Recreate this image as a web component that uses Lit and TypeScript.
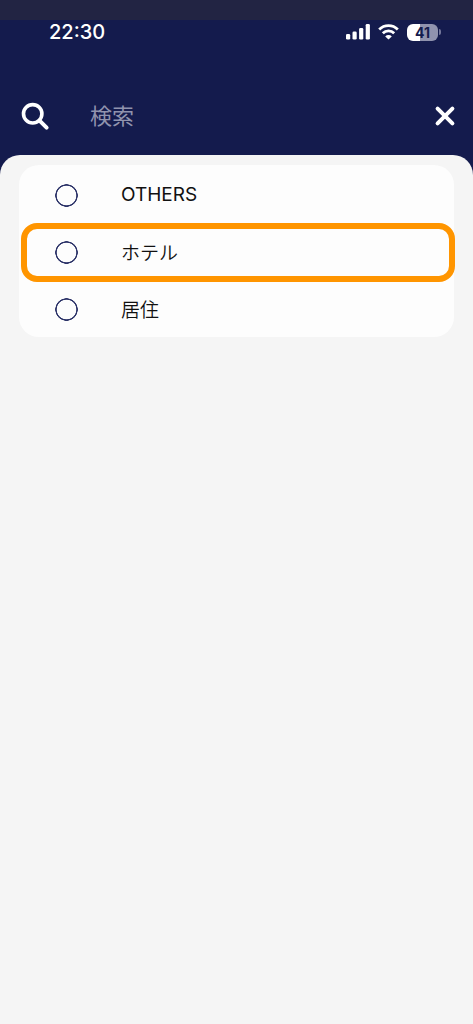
import { LitElement, html, css } from "lit";
import { customElement, state } from "lit/decorators.js";

interface Category {
  id: string;
  name: string;
  lang: string;
  highlighted?: boolean;
}

@customElement("status-bar")
export class StatusBar extends LitElement {
  static styles = css`
    :host {
      display: block;
      color: #fff;
    }
    .strip {
      height: 20px;
      background: #222443;
    }
    .bar {
      display: flex;
      justify-content: space-between;
      align-items: center;
      height: 24px;
      padding: 0 32px 0 49px;
    }
    .time {
      font-size: 20px;
      line-height: 24px;
      font-weight: 500;
    }
    .icons {
      display: flex;
      align-items: center;
      gap: 8px;
    }
    svg {
      display: block;
    }
    .battery {
      display: flex;
      align-items: center;
      gap: 1px;
    }
    .cell {
      width: 31px;
      height: 17px;
      border-radius: 6px;
      background: linear-gradient(to right, #fff 41%, #9093ae 41%);
      color: #141b4d;
      font-size: 14px;
      line-height: 17px;
      font-weight: 700;
      text-align: center;
    }
    .nub {
      width: 2px;
      height: 6px;
      border-radius: 0 2px 2px 0;
      background: #73779a;
    }
  `;

  render() {
    return html`
      <div class="strip"></div>
      <div class="bar">
        <span class="time">22:30</span>
        <div class="icons">
          <svg width="24" height="16" viewBox="0 0 24 16" fill="#fff" aria-hidden="true">
            <rect x="0" y="10" width="4.2" height="5.6" rx="1.3" />
            <rect x="6.5" y="7.5" width="4.2" height="8.1" rx="1.3" />
            <rect x="13.1" y="4" width="4.2" height="11.6" rx="1.3" />
            <rect x="19.7" y="0" width="4.2" height="15.6" rx="1.3" />
          </svg>
          <svg width="21" height="16" viewBox="0 0 21 16" aria-hidden="true">
            <g fill="none" stroke="#fff" stroke-width="2.8">
              <path d="M1.2 5.4a13.2 13.2 0 0 1 18.6 0" />
              <path d="M4.8 9.3a8.1 8.1 0 0 1 11.4 0" />
            </g>
            <path d="M10.5 15.6 7.2 12.4a4.7 4.7 0 0 1 6.6 0z" fill="#fff" />
          </svg>
          <div class="battery">
            <div class="cell">41</div>
            <div class="nub"></div>
          </div>
        </div>
      </div>
    `;
  }
}

@customElement("search-header")
export class SearchHeader extends LitElement {
  static styles = css`
    :host {
      display: flex;
      align-items: center;
      padding: 48px 16px 15px 20px;
    }
    svg {
      display: block;
      flex: none;
    }
    label {
      display: block;
    }
    input {
      flex: 1;
      min-width: 0;
      height: 48px;
      margin: 0 16px 0 40px;
      padding: 0;
      border: 0;
      outline: 0;
      background: none;
      color: #fff;
      font-family: inherit;
      font-size: 22px;
      font-weight: 400;
    }
    input::placeholder {
      color: #9093ae;
      opacity: 1;
    }
    button {
      padding: 0;
      border: 0;
      background: none;
      cursor: pointer;
    }
  `;

  render() {
    return html`
      <label for="query" aria-label="検索">
        <svg width="30" height="30" viewBox="0 0 30 30" fill="none" stroke="#fff">
          <circle cx="12.7" cy="12.8" r="9.2" stroke-width="3.6" />
          <path d="M19.8 19.8 26.6 26.6" stroke-width="4" stroke-linecap="round" />
        </svg>
      </label>
      <input id="query" type="text" placeholder="検索" />
      <button type="button" aria-label="閉じる">
        <svg width="24" height="24" viewBox="0 0 24 24" fill="none" stroke="#fff" stroke-width="4" stroke-linecap="round">
          <path d="M4.6 4.6 19.4 19.4M19.4 4.6 4.6 19.4" />
        </svg>
      </button>
    `;
  }
}

@customElement("app-root")
export class AppRoot extends LitElement {
  static styles = css`
    :host {
      display: flex;
      flex-direction: column;
      min-height: 100vh;
      background: #141b4d;
      font-family: Inter, "Noto Sans CJK JP", sans-serif;
    }
    main {
      flex: 1;
      padding: 10px 19px;
      border-radius: 20px 20px 0 0;
      background: #f5f5f5;
    }
    .card {
      display: flex;
      flex-direction: column;
      gap: 1px;
      margin: 0;
      padding: 2px 0 0;
      border: 0;
      border-radius: 20px;
      background: #fdfdfd;
    }
    .row {
      position: relative;
      display: flex;
      align-items: center;
      gap: 43px;
      height: 56px;
      padding: 0 36px;
      color: #111;
      font-size: 19px;
      line-height: 28px;
      font-weight: 400;
      cursor: pointer;
    }
    .name {
      display: block;
    }
    .name:lang(ja) {
      font-family: "Noto Sans CJK JP", sans-serif;
      font-weight: 350;
    }
    .highlighted::after {
      content: "";
      position: absolute;
      inset: -1px -1px -2px 2px;
      border: 6px solid #ff9500;
      border-radius: 16px;
      pointer-events: none;
    }
    input {
      appearance: none;
      box-sizing: border-box;
      width: 23px;
      height: 23px;
      margin: 0;
      border-radius: 50%;
      background: radial-gradient(
        closest-side,
        transparent 82%,
        #2c3368 88%,
        #2c3368 96%,
        transparent 100%
      );
    }
    input:checked {
      background: #2c3368;
      box-shadow: inset 0 0 0 4px #fdfdfd;
    }
  `;

  @state() private selected = "";

  private categories: Category[] = [
    { id: "others", name: "OTHERS", lang: "en" },
    { id: "hotel", name: "ホテル", lang: "ja", highlighted: true },
    { id: "housing", name: "居住", lang: "ja" },
  ];

  render() {
    return html`
      <status-bar></status-bar>
      <search-header></search-header>
      <main>
        <fieldset class="card" aria-label="カテゴリー">
          ${this.categories.map(
            (c) => html`
              <label class="row ${c.highlighted ? "highlighted" : ""}">
                <input
                  type="radio"
                  name="category"
                  .checked=${this.selected === c.id}
                  @change=${() => (this.selected = c.id)}
                />
                <span class="name" lang=${c.lang}>${c.name}</span>
              </label>
            `
          )}
        </fieldset>
      </main>
    `;
  }
}
